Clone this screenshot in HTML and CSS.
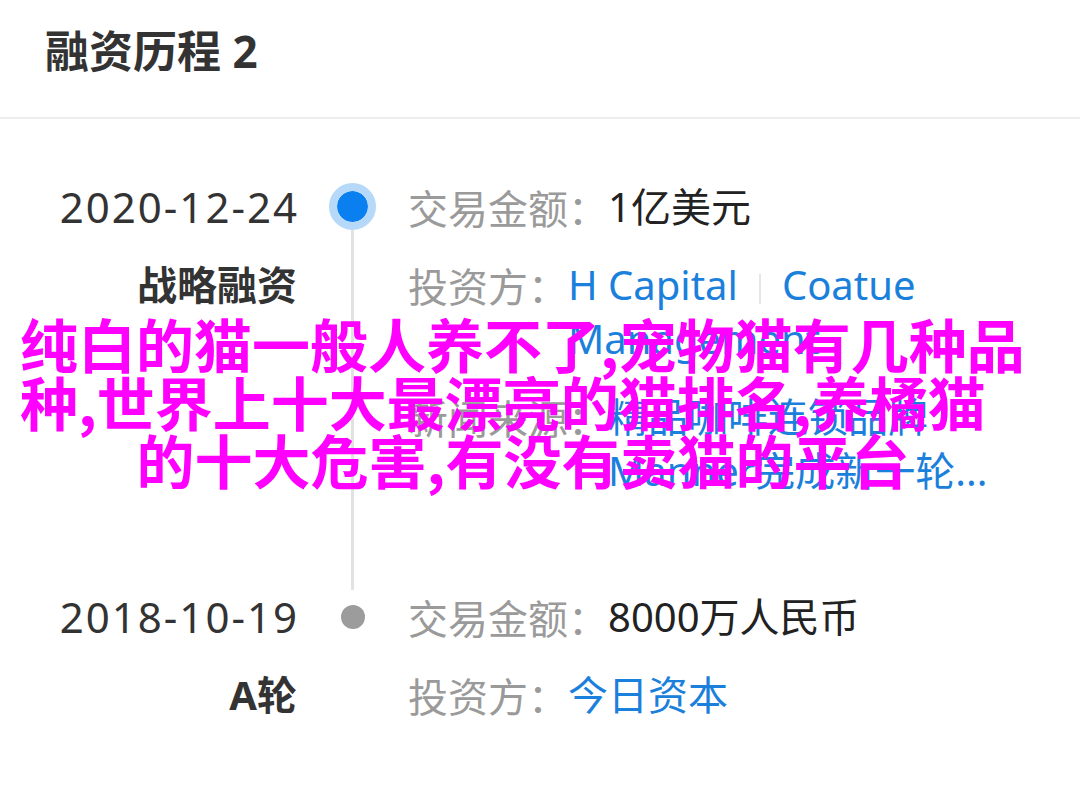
FILE: index.html
```html
<!DOCTYPE html>
<html lang="zh-CN">
<head>
<meta charset="utf-8">
<title>融资历程</title>
<link rel="stylesheet" href="styles.css">
</head>
<body>
<div class="page">
  <header class="title-bar">
    <h1 class="title">融资历程 2</h1>
  </header>

  <section class="timeline">
    <div class="event">
      <div class="col-left">
        <div class="date">2020-12-24</div>
        <div class="round">战略融资</div>
      </div>
      <div class="axis">
        <span class="dot active"></span>
        <span class="line"></span>
      </div>
      <div class="col-right">
        <div class="row">
          <span class="label">交易金额：</span><span class="value">1亿美元</span>
        </div>
        <div class="row">
          <span class="label">投资方：</span>
          <span class="value link investors"><span class="inv">H Capital</span><span class="sep"></span><span class="inv">Coatue</span> <span class="inv">Management</span></span>
        </div>
        <div class="row">
          <span class="label">新闻来源：</span>
          <span class="value link news">精品咖啡连锁品牌Manner完成新一轮...</span>
        </div>
      </div>
    </div>

    <div class="event">
      <div class="col-left">
        <div class="date">2018-10-19</div>
        <div class="round">A轮</div>
      </div>
      <div class="axis">
        <span class="dot"></span>
      </div>
      <div class="col-right">
        <div class="row">
          <span class="label">交易金额：</span><span class="value">8000万人民币</span>
        </div>
        <div class="row">
          <span class="label">投资方：</span><span class="value link">今日资本</span>
        </div>
      </div>
    </div>
  </section>

  <div class="overlay">纯白的猫一般人养不了,宠物猫有几种品种,世界上十大最漂亮的猫排名,养橘猫的十大危害,有没有卖猫的平台</div>
</div>
</body>
</html>
```

FILE: styles.css
```css
* {
  box-sizing: border-box;
}

html, body {
  margin: 0;
  padding: 0;
  background: #ffffff;
}

body {
  font-family: "Noto Sans", "Noto Sans CJK SC", sans-serif;
  color: #333333;
  width: 1080px;
  height: 789px;
  overflow: hidden;
}

.page {
  position: relative;
  width: 1080px;
  height: 789px;
}

.title-bar {
  height: 119px;
  padding: 24px 45px 0;
  border-bottom: 2px solid #ececec;
}

.title {
  margin: 0;
  font-size: 44px;
  line-height: 54px;
  font-weight: 700;
  color: #333333;
  font-family: "Noto Sans", "Noto Sans CJK SC", sans-serif;
}

.timeline {
  padding-top: 61px;
}

.event {
  display: flex;
  align-items: stretch;
}

.event:not(:last-child) > .col-right {
  padding-bottom: 92px;
}

.col-left {
  width: 297px;
  display: flex;
  flex-direction: column;
  align-items: flex-end;
  gap: 24px;
}

.date {
  font-size: 42px;
  line-height: 54px;
  letter-spacing: 2px;
  margin-right: -2px;
  color: #333333;
}

.round {
  font-size: 40px;
  line-height: 54px;
  font-weight: 700;
  color: #333333;
}

.axis {
  width: 111px;
  display: flex;
  flex-direction: column;
  align-items: center;
}

.dot {
  display: block;
  width: 24px;
  height: 24px;
  border-radius: 50%;
  background: #9c9c9c;
  margin-top: 15px;
  flex: none;
}

.dot.active {
  width: 47px;
  height: 47px;
  margin-top: 3px;
  background: #0a80f0;
  border: 8px solid #b6d9f9;
  background-clip: padding-box;
}

.line {
  display: block;
  flex: 1;
  width: 3px;
  background: #e2e2e2;
}

.col-right {
  flex: 1;
  padding-right: 40px;
  display: flex;
  flex-direction: column;
  gap: 24px;
}

.row {
  display: flex;
  font-size: 40px;
  line-height: 54px;
}

.label {
  flex: none;
  color: #9a9a9a;
  font-family: "Noto Sans CJK SC", sans-serif;
}

.value {
  color: #222222;
  min-width: 0;
}

.link {
  color: #1b80dc;
}

.investors .inv {
  white-space: nowrap;
}

.investors .sep {
  display: inline-block;
  width: 2px;
  height: 30px;
  margin: 0 21px;
  background: #e6e6e6;
  vertical-align: -4px;
}

.news {
  display: -webkit-box;
  -webkit-box-orient: vertical;
  -webkit-line-clamp: 2;
  overflow: hidden;
  letter-spacing: 0;
}

.overlay {
  position: absolute;
  left: 20px;
  top: 314px;
  width: 1006px;
  font-family: "Noto Sans CJK SC", sans-serif;
  font-size: 58px;
  line-height: 58px;
  font-weight: 700;
  color: #ff00ff;
  text-align: left;
  text-align-last: center;
}
```
